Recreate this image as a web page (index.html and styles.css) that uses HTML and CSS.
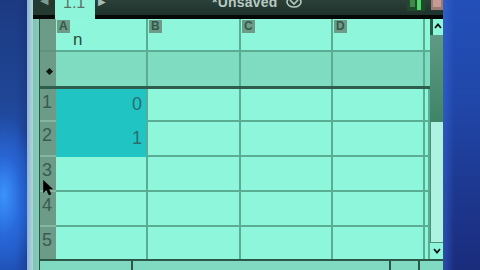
FILE: index.html
```html
<!DOCTYPE html>
<html>
<head>
<meta charset="utf-8">
<link rel="stylesheet" href="styles.css">
</head>
<body>
<div class="screen">
  <div class="bezel-left"></div>
  <div class="edge"></div>
  <div class="app">
    <div class="topbar">
      <div class="nav-prev"><span class="tri">&#9664;</span></div>
      <div class="tab"><span class="tab-text">1.1</span></div>
      <div class="titlebar">
        <span class="nav-next">&#9654;</span>
        <span class="docname">*Unsaved</span>
        <svg class="doc-icon" width="16" height="10" viewBox="0 0 16 10"><ellipse cx="8" cy="3" rx="7" ry="5" fill="none" stroke="#b6c8c0" stroke-width="1.6"/><path d="M4 1 L8 5 L12 1" fill="none" stroke="#b6c8c0" stroke-width="1.6"/></svg>
        <span class="spacer"></span>
        <svg class="battery" width="18" height="12" viewBox="0 0 18 12"><rect x="0" y="0" width="18" height="12" fill="#1f4a2c"/><rect x="3" y="0" width="5" height="8" fill="#3f8a4a"/><rect x="10" y="0" width="4" height="11" fill="#4cd86a"/></svg>
        <svg class="close" width="12" height="10" viewBox="0 0 12 10"><rect x="0" y="0" width="12" height="10" fill="#9a7a74"/><rect x="2" y="0" width="8" height="7" fill="#c79a94"/></svg>
      </div>
    </div>
    <div class="main">
      <div class="pad"></div>
      <div class="content">
        <div class="sheet">
          <div class="rh corner"></div>
          <div class="ch"><span class="lbl">A</span><span class="var">n</span></div>
          <div class="ch"><span class="lbl">B</span></div>
          <div class="ch"><span class="lbl">C</span></div>
          <div class="ch"><span class="lbl">D</span></div>
          <div class="ch filler"></div>

          <div class="rh formula-h"><span class="dia"></span></div>
          <div class="fc"></div>
          <div class="fc"></div>
          <div class="fc"></div>
          <div class="fc"></div>
          <div class="fc filler"></div>

          <div class="thick"></div>

          <div class="rh">1</div>
          <div class="c sel">0</div>
          <div class="c"></div>
          <div class="c"></div>
          <div class="c"></div>
          <div class="c filler"></div>

          <div class="rh">2</div>
          <div class="c sel">1</div>
          <div class="c"></div>
          <div class="c"></div>
          <div class="c"></div>
          <div class="c filler"></div>

          <div class="rh">3</div>
          <div class="c"></div>
          <div class="c"></div>
          <div class="c"></div>
          <div class="c"></div>
          <div class="c filler"></div>

          <div class="rh">4</div>
          <div class="c"></div>
          <div class="c"></div>
          <div class="c"></div>
          <div class="c"></div>
          <div class="c filler"></div>

          <div class="rh last">5</div>
          <div class="c last"></div>
          <div class="c last"></div>
          <div class="c last"></div>
          <div class="c last"></div>
          <div class="c filler last"></div>

          <div class="scroll">
            <div class="sc-up"><svg width="8" height="6" viewBox="0 0 8 6"><path d="M1 5 L4 1.5 L7 5" fill="none" stroke="#111" stroke-width="1.8"/></svg></div>
            <div class="sc-thumb"></div>
            <div class="sc-track"></div>
            <div class="sc-down"><svg width="8" height="6" viewBox="0 0 8 6"><path d="M1 1 L4 4.5 L7 1" fill="none" stroke="#111" stroke-width="1.8"/></svg></div>
          </div>
        </div>
        <div class="bottombar">
          <div class="bb b1"></div>
          <div class="bb b2"></div>
          <div class="bb b3"></div>
          <div class="bb b4"></div>
        </div>
      </div>
    </div>
  </div>
  <div class="bezel-right"></div>
</div>
<svg class="cursor" width="11" height="16" viewBox="0 0 11 16"><path d="M0.5 0.5 L0.5 12.5 L3.5 9.8 L6 15 L8 14 L5.6 9 L9.5 9 Z" fill="#000" stroke="#000" stroke-width="0.6"/></svg>
</body>
</html>
```

FILE: styles.css
```css
* { box-sizing: border-box; margin: 0; padding: 0; }
html, body { width: 480px; height: 270px; overflow: hidden; background: #1c3f90; }
body { font-family: "Liberation Sans", Arial, sans-serif; position: relative; }

.screen { display: flex; width: 480px; height: 270px; }

.bezel-left {
  width: 27px;
  background:
    radial-gradient(ellipse 34px 80px at 4px 195px, rgba(60,150,255,0.95) 0%, rgba(45,115,235,0.55) 50%, rgba(40,100,220,0) 100%),
    linear-gradient(to right, rgba(0,0,0,0) 60%, rgba(20,40,110,0.35) 100%),
    linear-gradient(to bottom, #1c3a82 0%, #1f4594 35%, #2256bc 65%, #2460cc 80%, #1f50b4 100%);
}
.edge { width: 6px; background: linear-gradient(to right, #8cb4cc, #b2d6dc); }

.app { width: 410px; display: flex; flex-direction: column; }

.topbar { height: 19px; display: flex; }
.nav-prev {
  width: 22px; background: #243a31; border-bottom: 4px solid #060c0a;
  display: flex; justify-content: center; align-items: flex-start; overflow: hidden;
}
.tri { color: #7f9a90; font-size: 11px; line-height: 11px; margin-top: -5px; }
.tab {
  width: 40px; background: #8ef5da; overflow: hidden;
  display: flex; align-items: flex-start; padding-left: 8px;
}
.tab-text { color: #5a7469; font-size: 16px; line-height: 16px; margin-top: -5px; }
.titlebar {
  flex: 1; display: flex; align-items: flex-start; overflow: hidden;
  background: linear-gradient(to bottom, #2a4038, #1c322a);
  border-bottom: 4px solid #040806;
}
.nav-next { color: #a9bcb4; font-size: 10px; line-height: 10px; margin-top: -3px; margin-left: 3px; }
.docname {
  color: #b8c9c1; font-size: 14px; font-weight: bold; line-height: 14px;
  margin-top: -5px; margin-left: 106px; letter-spacing: 0.2px;
}
.doc-icon { margin-left: 9px; margin-top: -1px; }
.spacer { flex: 1; }
.battery { margin-top: -1px; }
.close { margin-left: 6px; margin-right: 0; }

.main { flex: 1; display: flex; }
.pad { width: 6px; background: linear-gradient(to right, #7cc4b2, #86cdb9); }
.content { flex: 1; display: flex; flex-direction: column; border-left: 1px solid #2c5446; }

.sheet {
  display: grid;
  grid-template-columns: 16px 92px 93px 92px 92px 5px 13px;
  grid-template-rows: 33px 34px 3px 33px 35px 35px 35px 32px;
  background: #8ef7db;
}

.rh {
  background: #6c9c87; color: #3a5a52; font-size: 18px; line-height: 18px;
  padding: 4px 0 0 2px; border-bottom: 2px solid #86b6a0;
}
.rh.last { border-bottom: none; }
.corner { border-bottom: 2px solid #5f9480; }
.formula-h { display: flex; align-items: center; justify-content: center; border-bottom: none; }
.dia { width: 5px; height: 5px; background: #0c1612; transform: rotate(45deg); }

.ch {
  background: #8ef7db; border-right: 2px solid #5aad93; border-bottom: 2px solid #5aad93;
  position: relative; display: flex; flex-direction: column; align-items: flex-start;
}
.lbl {
  background: #6c9c87; color: #36574c; font-size: 12px; font-weight: bold;
  line-height: 13px; height: 13px; padding: 0 2px; margin: 1px 0 0 1px;
}
.var { color: #2e4a42; font-size: 17px; line-height: 14px; margin-left: 17px; margin-top: 0; }

.fc { background: #7fdcc1; border-right: 2px solid #5aad93; }
.filler { border-right: none; }

.thick { grid-column: 1 / 7; background: #2f5d4d; }

.c {
  background: #8ef7db; border-right: 2px solid #5aad93; border-bottom: 2px solid #5aad93;
  color: #2b6c6e; font-size: 18px; text-align: right; padding-right: 4px;
  display: flex; align-items: center; justify-content: flex-end;
}
.c.last { border-bottom: none; }
.c.sel { background: #20c4c2; border-right-color: #5aad93; border-bottom-color: #20c4c2; }
.c.filler { padding: 0; }

.scroll {
  grid-column: 7; grid-row: 1 / -1;
  display: flex; flex-direction: column;
}
.sc-up {
  height: 16px; background: #8ef7db; border-left: 3px solid #2a5a48;
  display: flex; align-items: center; justify-content: center; padding-bottom: 3px;
}
.sc-thumb { height: 87px; background: linear-gradient(to bottom, #5f9a84, #3f8468); }
.sc-track { height: 121px; background: #aef2e2; border-left: 1px solid #4f8f76; border-bottom: 1px solid #4f8f76; }
.sc-down {
  flex: 1; background: #8ef7db;
  display: flex; align-items: center; justify-content: center;
}

.bottombar {
  height: 11px; display: flex; border-top: 2px solid #2c5646; background: #7fd8c0;
}
.bb { background: #80dac2; border-right: 2px solid #2c5646; }
.b1 { width: 91px; margin-left: 2px; }
.b2 { width: 258px; }
.b3 { width: 29px; }
.b4 { flex: 1; border-right: none; }

.bezel-right {
  flex: 1;
  background:
    linear-gradient(to right, rgba(60,110,220,0.5) 0%, rgba(60,110,220,0) 30%),
    linear-gradient(to bottom, #2350b8 0%, #2046a8 40%, #1d3890 70%, #1a2c7c 100%);
}

.cursor { position: absolute; left: 43px; top: 180px; }
```
